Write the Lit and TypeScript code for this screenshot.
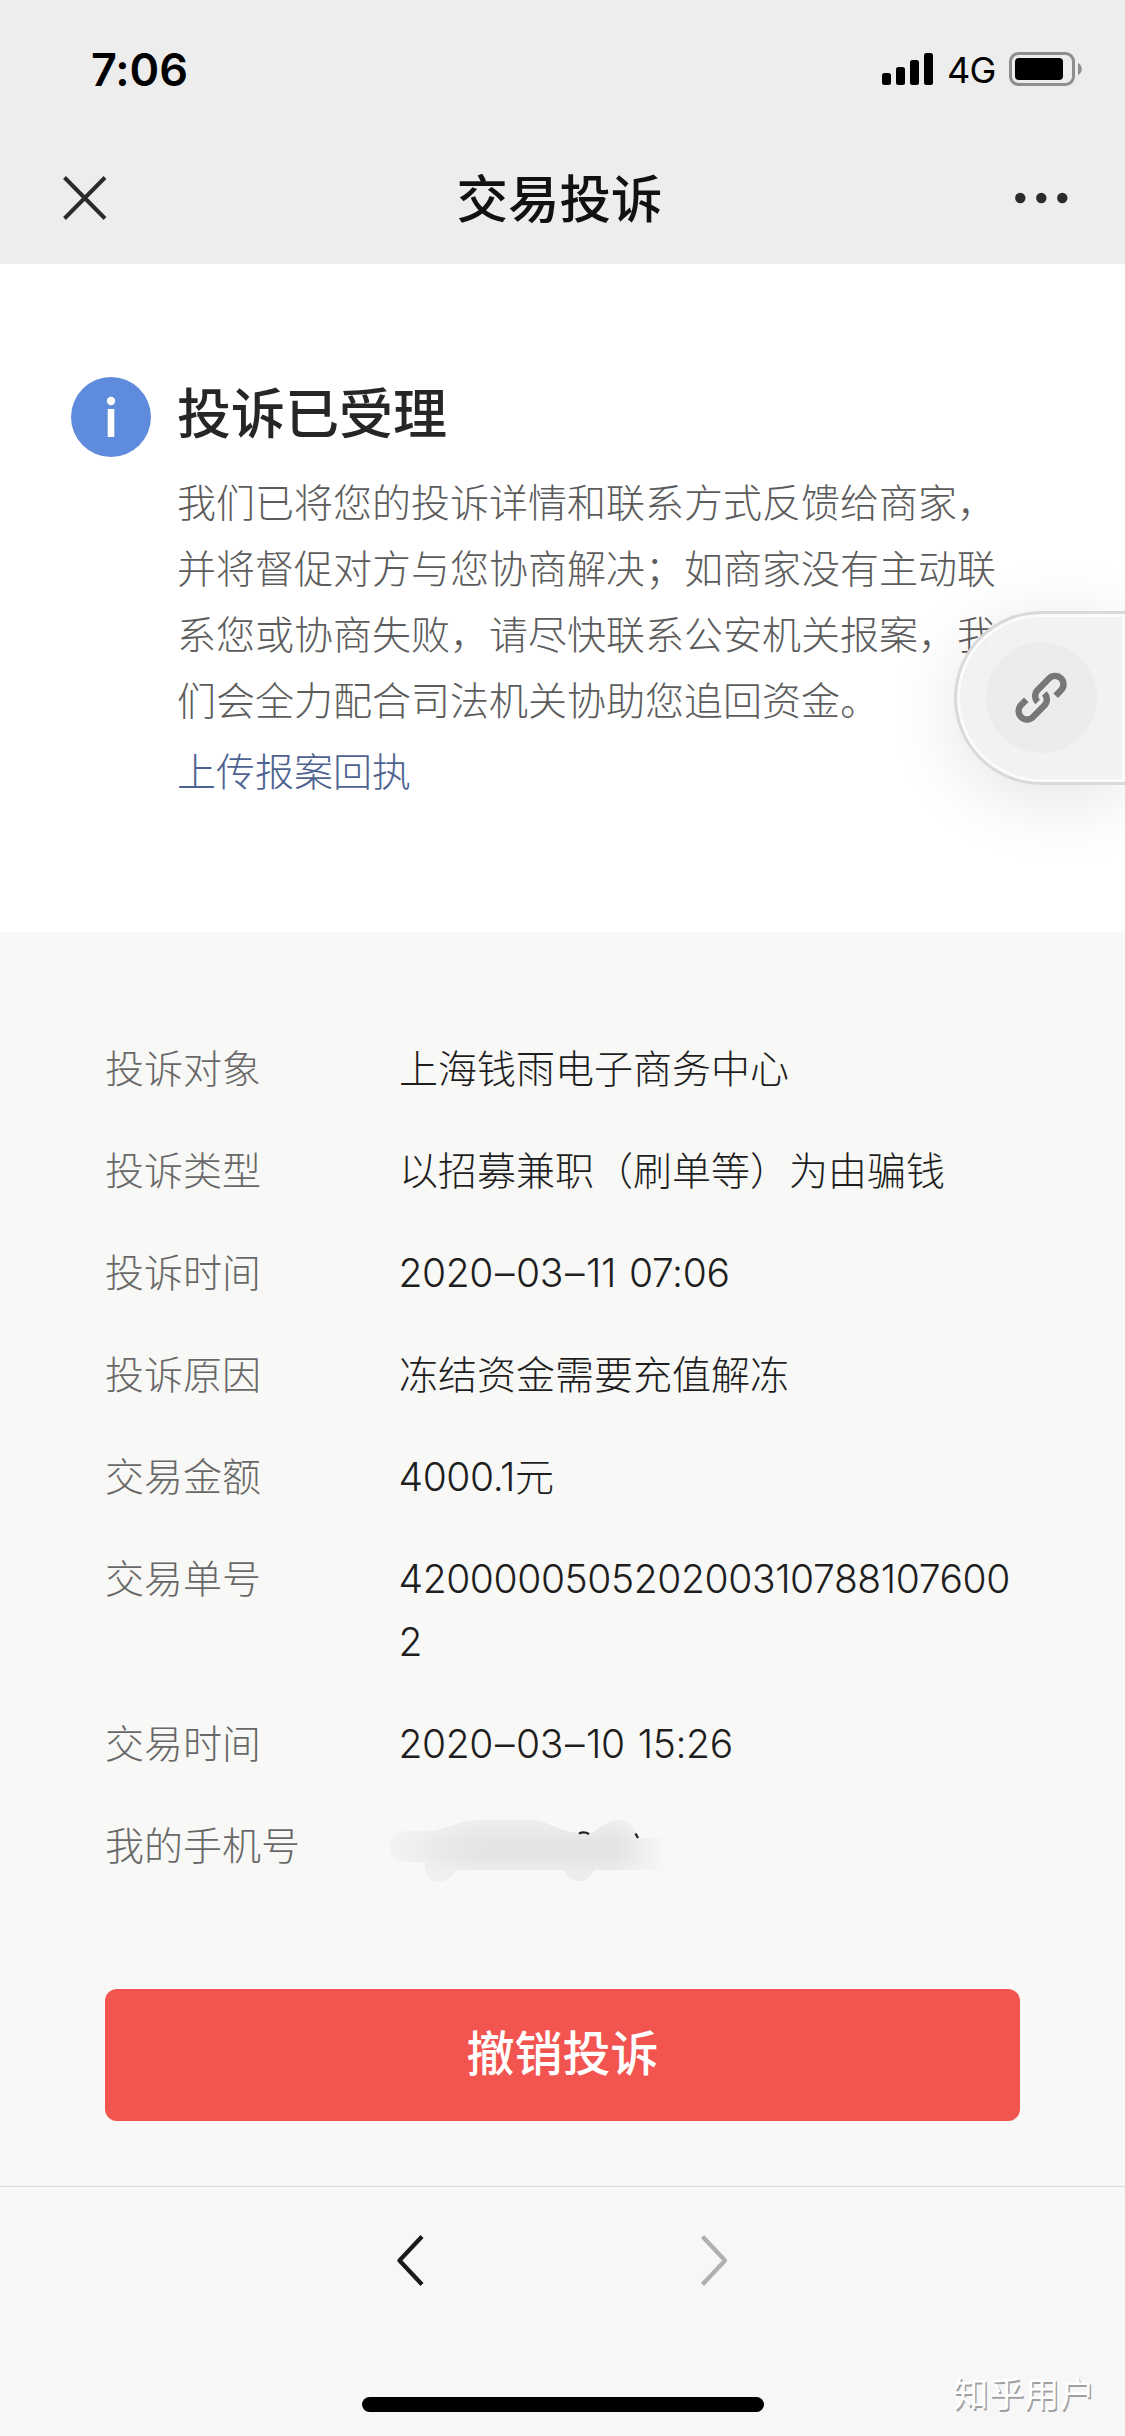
import { LitElement, html, css } from "lit";
import { customElement } from "lit/decorators.js";

const details = [
  ["投诉对象", "上海钱雨电子商务中心"],
  ["投诉类型", "以招募兼职（刷单等）为由骗钱"],
  ["投诉时间", "2020–03–11 07:06"],
  ["投诉原因", "冻结资金需要充值解冻"],
  ["交易金额", "4000.1元"],
  ["交易单号", "4200000505202003107881076002"],
  ["交易时间", "2020–03–10 15:26"],
];

/* Dates get a little air around each dash. */
const spaced = (value: string) =>
  value.split("–").map((part, i) => (i ? html`<span class="dash">–</span>${part}` : part));

@customElement("app-root")
export class AppRoot extends LitElement {
  static styles = css`
    :host {
      display: block;
      font-family: Inter, "Noto Sans CJK SC", sans-serif;
      color: #262626;
    }
    * { box-sizing: border-box; }
    svg { display: block; }
    .screen {
      position: relative;
      display: flex;
      flex-direction: column;
      width: 1125px;
      height: 2436px;
      overflow: hidden;
      background: #f8f8f6;
    }
    .top { height: 264px; flex: none; background: #ededed; }
    .status {
      height: 132px;
      padding: 6px 42px 0 91px;
      display: flex;
      align-items: center;
      justify-content: space-between;
      color: #000;
    }
    .time { font-size: 45px; font-weight: 600; letter-spacing: -0.1px; }
    .signals { display: flex; align-items: center; }
    .net { font-size: 36px; margin: 2px 14px 0 13px; letter-spacing: -0.8px; width: 48px; }
    .nav {
      height: 132px;
      display: flex;
      align-items: center;
      justify-content: space-between;
      padding: 0 55px 0 61px;
    }
    .title {
      font-size: 51.5px;
      font-weight: 500;
      color: #111;
      line-height: 132px;
      padding: 2px 3px 0 0;
      margin-left: -2px;
    }
    .notice {
      height: 668px;
      flex: none;
      background: #fff;
      padding: 113px 110px 0 71px;
      display: flex;
      gap: 26px;
    }
    .body { width: 828px; }
    .heading { margin: 0; font-size: 54px; font-weight: 500; line-height: 76px; }
    .para { margin: 17px 0 0; font-size: 39px; font-weight: 300; line-height: 66px; color: #5c5c5c; }
    .link { margin-top: 5px; font-size: 39px; font-weight: 300; line-height: 66px; color: #4d6290; }
    .details {
      flex: none;
      height: 1254px;
      padding: 105px 105px 0;
      display: flex;
      flex-direction: column;
    }
    .list { display: flex; flex-direction: column; gap: 39px; height: 952px; }
    .row { display: flex; font-size: 39px; font-weight: 300; line-height: 63px; }
    .label { width: 294px; flex: none; color: #686868; }
    .value { width: 616px; word-break: break-all; color: #1e1e1e; }
    .num { letter-spacing: -0.4px; word-spacing: 2.5px; margin-left: -0.5px; }
    .dash { margin: 0 2px; }
    .smudge { margin: -14px 0 0 -28px; }
    .btn {
      height: 132px;
      border-radius: 12px;
      background: #f25450;
      color: #fff;
      font-size: 48px;
      font-weight: 500;
      line-height: 129px;
      text-align: center;
    }
    .toolbar {
      flex: 1;
      background: #f7f7f7;
      border-top: 1px solid #dcdcdc;
      display: flex;
      flex-direction: column;
      align-items: center;
      justify-content: space-between;
      padding: 47px 0 24px;
    }
    .arrows { display: flex; gap: 275px; }
    .home { width: 402px; height: 15px; border-radius: 8px; background: #000; }
    .float {
      position: absolute;
      left: 954px;
      top: 611px;
      width: 171px;
      height: 174px;
      border-radius: 87px 0 0 87px;
      border: 3px solid #d9d9d9;
      border-right: 0;
      background: rgba(242, 242, 242, 0.98);
      box-shadow: 0 14px 72px rgba(0, 0, 0, 0.11), inset 0 0 0 3px #fbfbfb;
      padding: 28px 0 0 29px;
    }
    .disc {
      width: 111px;
      height: 111px;
      border-radius: 50%;
      background: #ececec;
    }
    .mark {
      position: absolute;
      left: 953px;
      top: 2369px;
      font-size: 35.5px;
      line-height: 52px;
      font-weight: 400;
      color: #fff;
      text-shadow: 1.5px 1.5px 0.5px #a0a0a0;
    }
  `;

  render() {
    return html`
      <div class="screen">
        <header class="top">
          <div class="status">
            <span class="time">7:06</span>
            <div class="signals">
              <svg width="52" height="34" viewBox="0 0 52 34">
                <rect x="0" y="21" width="9" height="12" rx="2.5" />
                <rect x="14" y="15" width="9" height="18" rx="2.5" />
                <rect x="28" y="8" width="9" height="25" rx="2.5" />
                <rect x="42" y="1" width="9" height="32" rx="2.5" />
              </svg>
              <span class="net">4G</span>
              <svg width="74" height="34" viewBox="0 0 74 34">
                <rect x="1.500" y="1.500" width="63" height="31" rx="8" fill="none" stroke="#8e8e8e" stroke-width="3" />
                <rect x="6" y="6" width="48" height="22" rx="4" />
                <path d="M69 11c5 2 5 10 0 12z" fill="#8e8e8e" />
              </svg>
            </div>
          </div>
          <div class="nav">
            <svg width="48" height="48" viewBox="0 0 48 48" stroke="#2b2b2b" stroke-width="4">
              <path d="M3.500 3.500L44 44.500M44 3.500L3.500 44.500" />
            </svg>
            <span class="title">交易投诉</span>
            <svg width="55" height="12" viewBox="0 0 55 12" fill="#2b2b2b">
              <circle cx="5.300" cy="6" r="5.200" /><circle cx="26.300" cy="6" r="5.200" /><circle cx="47.300" cy="6" r="5.200" />
            </svg>
          </div>
        </header>
        <section class="notice">
          <svg width="80" height="80" viewBox="0 0 80 80">
            <circle cx="40" cy="40" r="40" fill="#5f8bdc" />
            <circle cx="40" cy="24" r="4.200" fill="#fff" />
            <rect x="36.700" y="32" width="6.600" height="28" fill="#fff" />
          </svg>
          <div class="body">
            <h1 class="heading">投诉已受理</h1>
            <p class="para">
              我们已将您的投诉详情和联系方式反馈给商家，<br />并将督促对方与您协商解决；如商家没有主动联<br />系您或协商失败，请尽快联系公安机关报案，我<br />们会全力配合司法机关协助您追回资金。
            </p>
            <div class="link">上传报案回执</div>
          </div>
        </section>
        <section class="details">
          <div class="list">
            ${details.map(
              ([label, value]) => html`
                <div class="row">
                  <span class="label">${label}</span>
                  <span class="value ${/^\d/.test(value) ? "num" : ""}">${spaced(value)}</span>
                </div>
              `
            )}
            <div class="row">
              <span class="label">我的手机号</span>
              <svg class="smudge" width="320" height="90" viewBox="0 0 320 90">
                <defs>
                  <linearGradient id="fade">
                    <stop offset="0" stop-color="#f4f4f3" />
                    <stop offset="0.15" stop-color="#ebebeb" />
                    <stop offset="0.3" stop-color="#e5e5e5" />
                    <stop offset="0.78" stop-color="#e4e4e4" />
                    <stop offset="0.96" stop-color="#f8f8f6" />
                  </linearGradient>
                  <linearGradient id="shade" x1="0" y1="0" x2="0" y2="1">
                    <stop offset="0" stop-color="#f8f8f6" stop-opacity="0.5" />
                    <stop offset="0.35" stop-color="#f8f8f6" stop-opacity="0" />
                    <stop offset="0.6" stop-color="#f8f8f6" stop-opacity="0" />
                    <stop offset="0.85" stop-color="#f8f8f6" stop-opacity="0.4" />
                  </linearGradient>
                  <path id="blot" d="M32 31H60C80 28 90 20 112 20H160C176 20 185 31 207 33H222C230 26 238 20 249 20C258 20 265 30 267 38H308V70H223C217 85 200 85 193 70H84C78 86 54 86 54 66V62H32C14 62 14 31 32 31Z" />
                </defs>
                <use href="#blot" fill="url(#fade)" />
                <use href="#blot" fill="url(#shade)" />
                <path d="M208 33.500Q213 31 218 34M264.500 33.500L267 38" fill="none" stroke="#222" stroke-width="2.400" />
              </svg>
            </div>
          </div>
          <div class="btn">撤销投诉</div>
        </section>
        <footer class="toolbar">
          <div class="arrows">
            <svg width="28" height="54" viewBox="0 0 28 54" fill="none" stroke="#1a1a1a" stroke-width="4.200" stroke-linejoin="round">
              <path d="M25 2.500L2.500 26.500L25 50.500" />
            </svg>
            <svg width="28" height="54" viewBox="0 0 28 54" fill="none" stroke="#b0b0b0" stroke-width="4.200" stroke-linejoin="round">
              <path d="M2.500 2.500L25 26.500L2.500 50.500" />
            </svg>
          </div>
          <div class="home"></div>
        </footer>
        <div class="float">
          <div class="disc">
            <svg width="111" height="111" viewBox="0 0 111 111" fill="none" stroke="#777" stroke-width="6.400">
              <path d="M69.700 53.700L75 48.300A8.450 8.450 0 0 0 63 36.400L51.700 48A8.450 8.450 0 0 0 51.700 60" />
              <path d="M40.300 57.700L35 63.100A8.450 8.450 0 0 0 47 75L58.300 63.400A8.450 8.450 0 0 0 58.300 51.400" />
            </svg>
          </div>
        </div>
        <div class="mark">知乎用户</div>
      </div>
    `;
  }
}
